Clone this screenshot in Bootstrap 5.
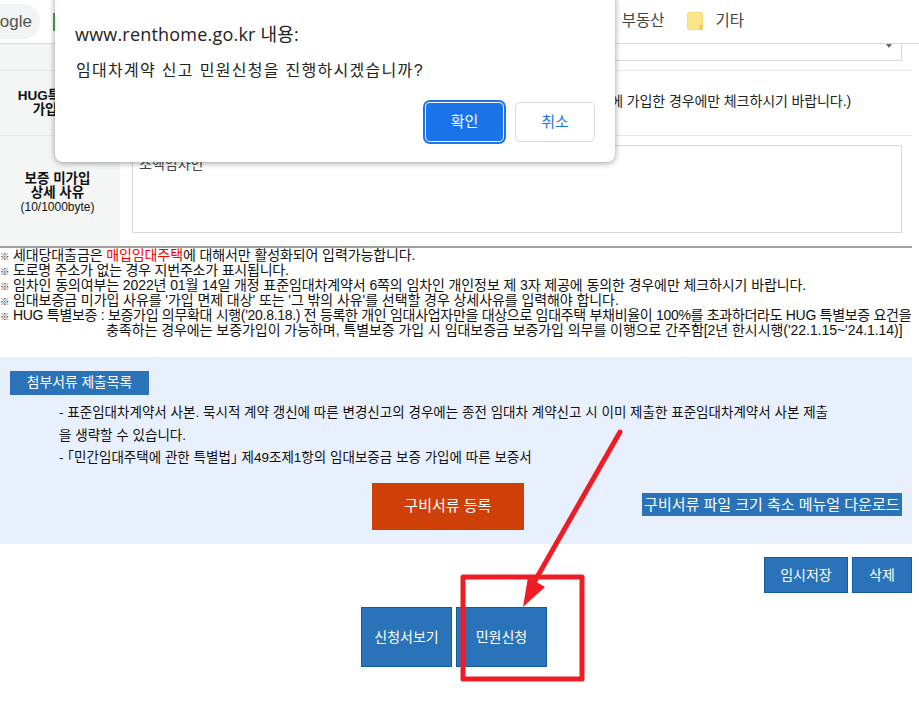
<!DOCTYPE html>
<html lang="ko">
<head>
<meta charset="utf-8">
<title>민원신청</title>
<link href="https://cdn.jsdelivr.net/npm/bootstrap@5.3.0/dist/css/bootstrap.min.css" rel="stylesheet">
<style>
html,body{margin:0;background:#fff;overflow:hidden}
body{font-family:"Liberation Sans","Noto Sans CJK KR",sans-serif;font-size:13px;color:#111}
.stage{position:relative;width:919px;height:701px;overflow:hidden}
.topbar{height:44px;border-bottom:1px solid #dcdcdc;font-size:15.5px;color:#444}
.chip{width:40px;height:35px;background:#f1f3f4;border-radius:0 17px 17px 0;padding-right:8px;white-space:nowrap;color:#555;font-size:17px}
.greenbit{width:3px;height:18px;background:#4caf50;margin-left:13px}
.marks{margin-left:auto;margin-right:175px;gap:23px;padding-bottom:2px}
.mark-folder{width:16px;height:18px;background:#fde58c;border:1px solid #f6dc80;border-radius:2px;display:block;position:relative}
.mark-folder::after{content:"";position:absolute;right:-1px;bottom:-1px;width:4px;height:6px;background:#f3cf5f;border-radius:2px 2px 0 0}
.form-wrap{width:912px}
.frow{display:flex;border-bottom:1px solid #e6e6e6}
.flabel{width:120px;flex:none;background:#f4f6f6;font-weight:700;text-align:center;line-height:14.5px;padding-right:5px;font-size:13.5px;display:flex;flex-direction:column;justify-content:center}
.flabel small{font-weight:400;font-size:12px;line-height:13px}
.r3 .flabel{padding-top:3px}
.fcell{flex:1;padding:0 10px 0 12px;min-width:0}
.r1{height:27px}.r2{height:65px}.r3{height:110px;border-bottom:0}
.fakeselect{height:17px;border:1px solid #d9d9d9;border-top:0;position:relative}
.fakeselect::after{content:"";position:absolute;right:9px;top:0;border:3px solid transparent;border-top:4px solid #666}
.agree{height:100%;text-align:right;padding-right:51px;line-height:60px;color:#222;white-space:nowrap;font-size:14px;letter-spacing:-.1px}
.memo{width:100%;height:88px;margin-top:9px;border:1px solid #d9d9d9;padding:9px 6px;color:#444;resize:none;display:block;outline:0;background:#fff;font-size:14px;line-height:18px}
.rule{height:2px;background:#a0a0a0;width:912px}
.notes{line-height:15px;font-size:14px;padding-bottom:19px;white-space:nowrap;color:#111}
.notes div{height:15px}
.notes .red{color:#f00}
.mk{display:inline-block;width:13px;font-size:9.5px;letter-spacing:0;color:#333}
.n1{letter-spacing:-.1px}.n2{letter-spacing:-.2px}.n3{letter-spacing:-.1px}.n4{letter-spacing:-.07px}.n5{letter-spacing:-.3px}.n6{letter-spacing:-.05px}
.hang{padding-left:106px}
.attach{width:912px;height:187px;background:#e8f0fd;position:relative;padding:14px 10px 0}
.tag{display:block;width:139px;height:24px;line-height:24px;background:#2a73b9;color:#fff;text-align:center;font-size:13.8px}
.attach-text{padding:7px 0 0 49px;line-height:22.5px;white-space:nowrap;font-size:13.5px;letter-spacing:.02px}
.brk{font-feature-settings:"halt"}
.reg-row{display:flex;align-items:center;padding-left:362px;margin-top:13px}
.btn-reg{width:152px;height:47px;background:#cf4008;color:#fff;border:0;border-radius:0;font-size:15px;padding:0}
.btn-reg:hover{background:#cf4008;color:#fff}
.dl{margin:0 0 4px 118px;width:261px;height:23px;line-height:23px;background:#2a73b9;color:#fff;font-size:15px;text-align:center;white-space:nowrap;overflow:hidden}
.btn-blue{background:#2a73b9;border:1px solid #0f5c9e;color:#fff;border-radius:0;padding:0;font-size:14px}
.btn-blue:hover{background:#2a73b9;color:#fff;border-color:#0f5c9e}
.side-actions{width:912px;padding-top:13px;gap:4px}
.s1{width:84px;height:36px}.s2{width:60px;height:36px}
.main-actions{padding:14px 0 0 361px;gap:4px}
.m1{width:91px;height:60px}
.dialog{position:absolute;left:55px;top:-8px;width:560px;height:170px;background:#fff;border-radius:8px;box-shadow:0 1px 6px rgba(0,0,0,.4);padding:30px 20px 0}
.dlg-title{font-family:"Open Sans","Noto Sans CJK KR",sans-serif;font-size:18px;letter-spacing:.2px;line-height:24px;color:#222;margin:0;font-weight:400}
.dlg-msg{font-size:16px;line-height:20px;letter-spacing:1.3px;margin:15px 0 0 1px;color:#222}
.dlg-btns{position:absolute;right:20px;bottom:19px;gap:10px;align-items:center}
.btn-ok,.btn-ok:hover,.btn-ok:focus{width:81px;height:42px;background:#1a73e8;color:#fff;border:2px solid #fff;outline:2px solid #1a73e8;outline-offset:-1px;border-radius:6px;font-size:15px;padding:0}
.btn-no,.btn-no:hover{width:80px;height:40px;background:#fff;color:#1a73e8;border:1px solid #dadce0;border-radius:5px;font-size:15px;padding:0}
.overlay{position:absolute;left:0;top:0;width:919px;height:701px;pointer-events:none}
</style>
</head>
<body>
<div class="stage">
  <div class="topbar d-flex align-items-center">
    <div class="chip d-flex justify-content-end align-items-center"><span>ogle</span></div>
    <span class="greenbit"></span>
    <div class="marks d-flex align-items-center">
      <span>부동산</span>
      <span class="d-flex align-items-center gap-2"><span class="mark-folder"></span><span class="ms-1">기타</span></span>
    </div>
  </div>
  <div class="form-wrap">
    <div class="frow r1"><div class="flabel"></div><div class="fcell"><div class="fakeselect"></div></div></div>
    <div class="frow r2"><div class="flabel"><span>HUG특별보증</span><span>가입여부</span></div><div class="fcell"><div class="agree">(HUG 특별보증에 가입한 경우에만 체크하시기 바랍니다.)</div></div></div>
    <div class="frow r3"><div class="flabel"><span>보증 미가입</span><span>상세 사유</span><small>(10/1000byte)</small></div><div class="fcell"><textarea class="memo" readonly>소액임차인</textarea></div></div>
  </div>
  <div class="rule"></div>
  <div class="notes">
    <div class="n1"><span class="mk">※</span>세대당대출금은 <span class="red">매입임대주택</span>에 대해서만 활성화되어 입력가능합니다.</div>
    <div class="n2"><span class="mk">※</span>도로명 주소가 없는 경우 지번주소가 표시됩니다.</div>
    <div class="n3"><span class="mk">※</span>임차인 동의여부는 2022년 01월 14일 개정 표준임대차계약서 6쪽의 임차인 개인정보 제 3자 제공에 동의한 경우에만 체크하시기 바랍니다.</div>
    <div class="n4"><span class="mk">※</span>임대보증금 미가입 사유를 '가입 면제 대상' 또는 '그 밖의 사유'를 선택할 경우 상세사유를 입력해야 합니다.</div>
    <div class="n5"><span class="mk">※</span>HUG 특별보증 : 보증가입 의무확대 시행('20.8.18.) 전 등록한 개인 임대사업자만을 대상으로 임대주택 부채비율이 100%를 초과하더라도 HUG 특별보증 요건을</div>
    <div class="hang n6">충족하는 경우에는 보증가입이 가능하며, 특별보증 가입 시 임대보증금 보증가입 의무를 이행으로 간주함[2년 한시시행('22.1.15~'24.1.14)]</div>
  </div>
  <div class="attach">
    <span class="tag">첨부서류 제출목록</span>
    <div class="attach-text">
      <div>- 표준임대차계약서 사본. 묵시적 계약 갱신에 따른 변경신고의 경우에는 종전 임대차 계약신고 시 이미 제출한 표준임대차계약서 사본 제출</div>
      <div>을 생략할 수 있습니다.</div>
      <div>- <span class="brk">「</span>민간임대주택에 관한 특별법<span class="brk">」</span> 제49조제1항의 임대보증금 보증 가입에 따른 보증서</div>
    </div>
    <div class="reg-row">
      <button class="btn btn-reg" type="button">구비서류 등록</button>
      <span class="dl">구비서류 파일 크기 축소 메뉴얼 다운로드</span>
    </div>
  </div>
  <div class="side-actions d-flex justify-content-end">
    <button class="btn btn-blue s1" type="button">임시저장</button>
    <button class="btn btn-blue s2" type="button">삭제</button>
  </div>
  <div class="main-actions d-flex">
    <button class="btn btn-blue m1" type="button">신청서보기</button>
    <button class="btn btn-blue m1" type="button">민원신청</button>
  </div>

  <svg class="overlay" viewBox="0 0 919 701" aria-hidden="true">
    <rect x="463" y="577" width="119" height="102" fill="none" stroke="#ee1c25" stroke-width="5" stroke-linejoin="round"/>
    <line x1="620" y1="432" x2="532" y2="586" stroke="#ee1c25" stroke-width="5" stroke-linecap="round"/>
    <polygon points="523,607 528,577 545,587" fill="#ee1c25"/>
  </svg>

  <div class="dialog">
    <p class="dlg-title">www.renthome.go.kr 내용:</p>
    <p class="dlg-msg">임대차계약 신고 민원신청을 진행하시겠습니까?</p>
    <div class="dlg-btns d-flex">
      <button class="btn btn-ok" type="button">확인</button>
      <button class="btn btn-no" type="button">취소</button>
    </div>
  </div>
</div>
</body>
</html>
